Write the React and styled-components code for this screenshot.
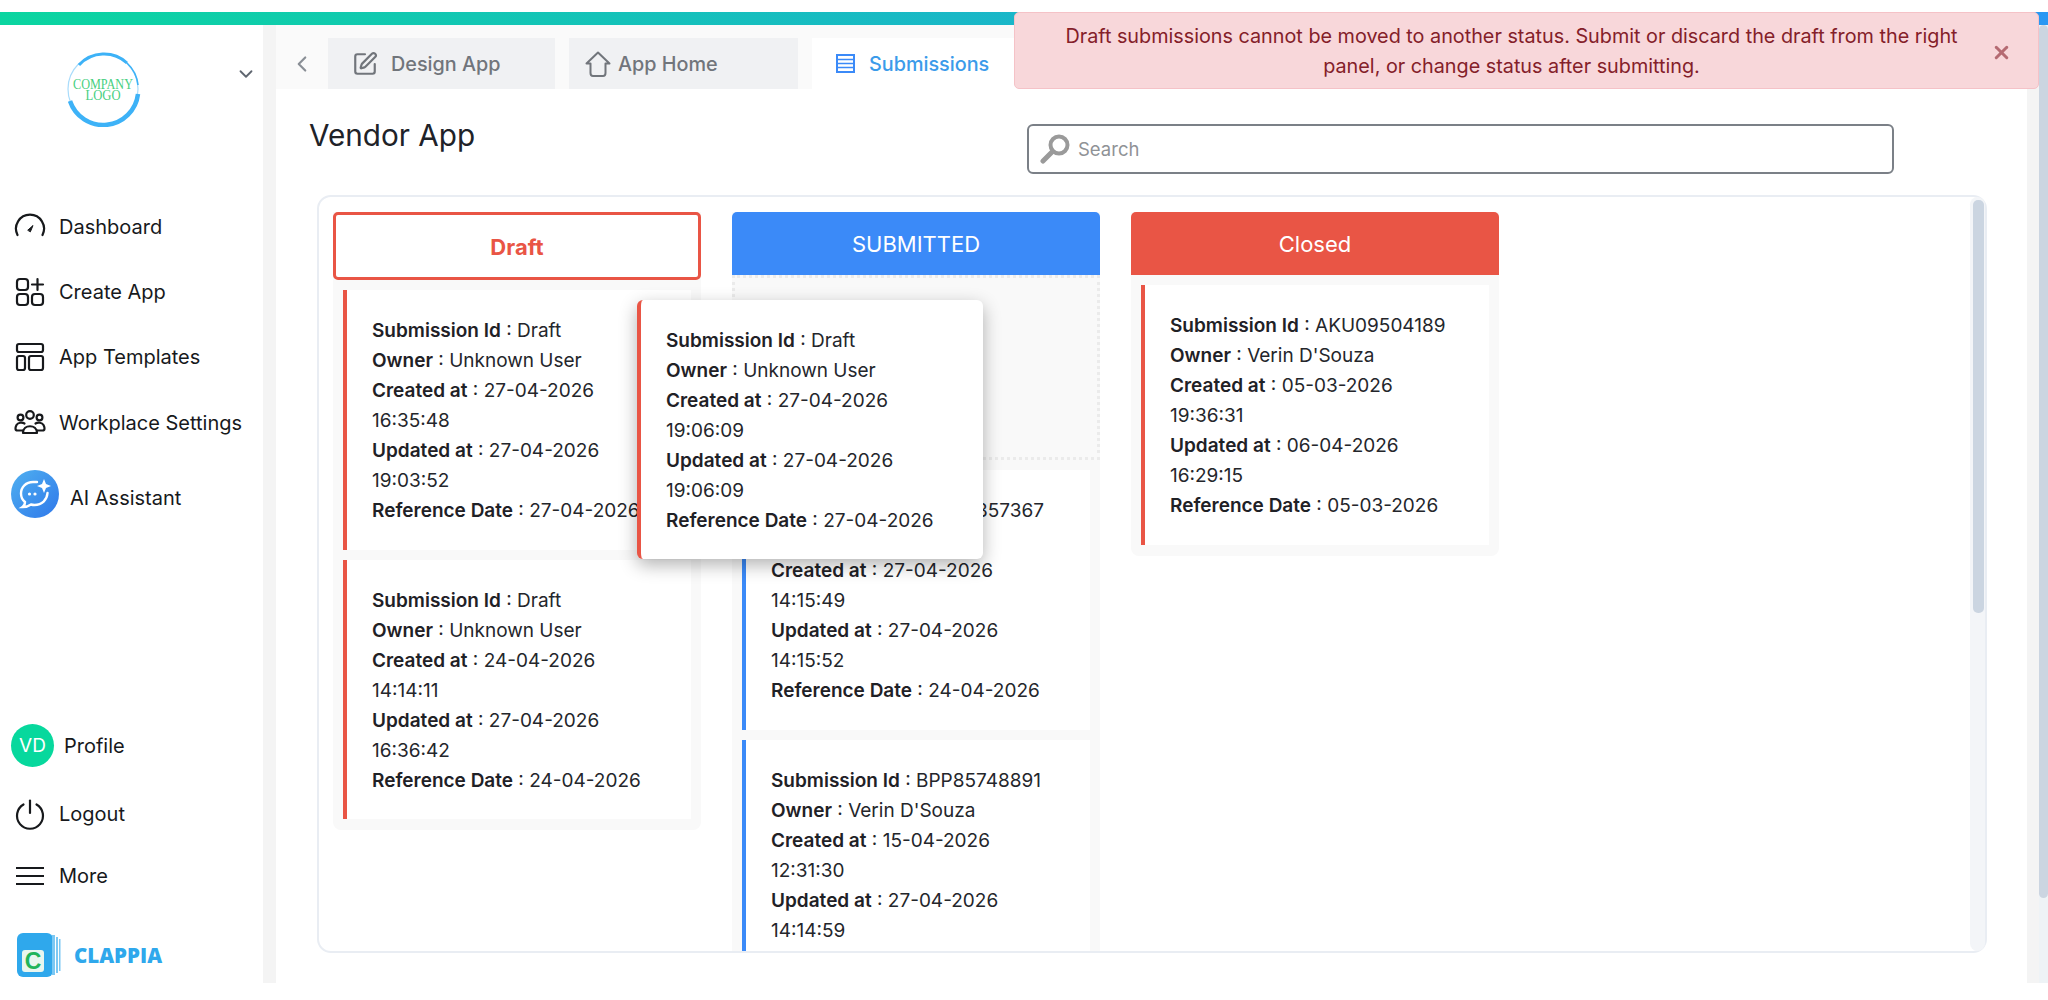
import React from "react";
import styled, { createGlobalStyle } from "styled-components";
import { ChevronDown, ChevronLeft, SquarePen, X } from "lucide-react";

const GlobalStyle = createGlobalStyle`
  html, body {
    margin: 0;
    height: 100%;
    overflow: hidden;
    background: #ffffff;
    font-family: Inter, "Liberation Sans", sans-serif;
    color: #1f2126;
  }
  * { box-sizing: border-box; }
`;

const Page = styled.div`
  position: relative;
  width: 2048px;
  height: 1000px;
  padding-top: 12px;
  overflow: hidden;
`;

const ProgressBar = styled.div`
  height: 13px;
  background: linear-gradient(90deg, #0bd5a0 0%, #1ab6c9 50%, #2997f3 100%);
`;

const Shell = styled.div`
  display: flex;
  height: 958px;
`;

const Sidebar = styled.aside`
  flex: 0 0 263px;
  display: flex;
  flex-direction: column;
  background: #ffffff;
  padding-bottom: 6px;
`;

const Brand = styled.div`
  position: relative;
  height: 169px;
  padding: 26px 0 0 65px;
`;

const BrandChevron = styled(ChevronDown)`
  position: absolute;
  top: 38px;
  left: 235px;
  color: #5f6670;
`;

const NavItem = styled.div`
  display: flex;
  align-items: center;
  gap: ${(p) => p.$gap || 13}px;
  height: ${(p) => p.$h || 65.3}px;
  padding-left: ${(p) => p.$left || 14}px;
  margin-top: ${(p) => p.$top || 0}px;
  font-size: 20px;
  color: #17191c;
`;

const NavIcon = styled.svg`
  flex: 0 0 32px;
  width: 32px;
  height: 32px;
  fill: none;
  stroke: #17191c;
  stroke-width: 2.2;
  stroke-linecap: round;
  stroke-linejoin: round;
`;

const AiBadge = styled.div`
  flex: 0 0 48px;
  width: 48px;
  height: 48px;
  border-radius: 50%;
  background: linear-gradient(135deg, #4fb0f0, #2f78ea);
  display: flex;
  align-items: center;
  justify-content: center;
`;

const AiLabel = styled.span`
  padding-top: 7px;
`;

const SidebarBottom = styled.div`
  margin-top: auto;
`;

const Avatar = styled.div`
  flex: 0 0 43px;
  width: 43px;
  height: 43px;
  border-radius: 50%;
  background: #07d89d;
  color: #ffffff;
  font-size: 19px;
  display: flex;
  align-items: center;
  justify-content: center;
`;

const ClappiaRow = styled.div`
  display: flex;
  align-items: center;
  gap: 13px;
  height: 44px;
  margin-top: 35px;
  padding-left: 17px;
`;

const ClappiaName = styled.span`
  font-family: "Open Sans", sans-serif;
  font-weight: 800;
  font-size: 20.5px;
  color: #2fa8ec;
`;

const Main = styled.main`
  flex: 1;
  height: 958px;
  overflow: hidden;
  padding: 0 12px 0 13px;
  background: #f4f4f4;
`;

const PageScrollbar = styled.div`
  flex: 0 0 9px;
  background: #eef3f6;
`;

const ScrollThumb = styled.div`
  height: ${(p) => p.$h}px;
  background: #cbd5e1;
  border-radius: 5px;
`;

const Content = styled.div`
  height: 100%;
  background: #ffffff;
`;

const TabBar = styled.div`
  display: flex;
  align-items: flex-end;
  height: 64px;
  background: #fafafa;
`;

const TabBack = styled(ChevronLeft)`
  flex: 0 0 52px;
  align-self: center;
  margin-top: 13px;
  color: #8a8f96;
`;

const Tab = styled.div`
  display: flex;
  align-items: center;
  gap: ${(p) => p.$gap}px;
  width: ${(p) => p.$w}px;
  height: 51px;
  margin-right: 14px;
  padding-left: ${(p) => p.$pad}px;
  background: ${(p) => (p.$active ? "#ffffff" : "#f0f1f3")};
  color: ${(p) => (p.$active ? "#3b9bea" : "#71757b")};
  font-size: 19.8px;
  font-weight: 500;
`;

const TabIcon = styled.svg`
  fill: none;
  stroke: currentColor;
  stroke-width: 2;
  stroke-linejoin: round;
  stroke-linecap: round;
`;

const HeadRow = styled.div`
  display: grid;
  grid-template-columns: 718px 867px;
  height: 106px;
  padding: 35px 0 0 33px;
`;

const Title = styled.h1`
  margin: -3px 0 0;
  font-size: 29.7px;
  font-weight: 400;
  line-height: 1;
  color: #202228;
`;

const SearchBox = styled.label`
  display: flex;
  align-items: center;
  gap: 6px;
  height: 50px;
  padding-left: 11px;
  border: 2px solid #7b8087;
  border-radius: 6px;
`;

const SearchInput = styled.input`
  flex: 1;
  border: 0;
  outline: 0;
  background: transparent;
  font: 400 18.5px Inter, sans-serif;
  &::placeholder { color: #8f9296; opacity: 1; }
`;

const Board = styled.section`
  position: relative;
  width: 1670px;
  height: 758px;
  margin-left: 41px;
  border: 2px solid #e9edf3;
  border-radius: 14px;
  background: #ffffff;
`;

const BoardClip = styled.div`
  height: 100%;
  overflow: hidden;
  border-radius: 12px;
`;

const BoardScrollbar = styled.div`
  position: absolute;
  top: 0;
  right: 0;
  bottom: 0;
  width: 15px;
  padding: 3px 1px 0 3px;
  background: #f3f5f8;
  border-radius: 8px;
`;

const Lanes = styled.div`
  display: flex;
  align-items: flex-start;
  gap: 31px;
  padding: 15px 0 0 14px;
`;

const Lane = styled.div`
  flex: 0 0 368px;
  background: #f9f9f9;
  border-radius: 0 0 8px 8px;
  padding-bottom: 11px;
`;

const LaneHead = styled.div`
  display: flex;
  align-items: center;
  justify-content: center;
  height: ${(p) => (p.$outlined ? 68 : 63)}px;
  border-radius: 5px 5px 0 0;
  font-size: 22px;
  background: ${(p) => (p.$outlined ? "#ffffff" : p.$color)};
  color: ${(p) => (p.$outlined ? p.$color : "#ffffff")};
  font-weight: ${(p) => (p.$outlined ? 700 : 400)};
  border: ${(p) => (p.$outlined ? `3px solid ${p.$color}` : "0")};
  ${(p) => p.$outlined && "border-radius: 5px; padding-top: 2px;"}
`;

const DropZone = styled.div`
  height: 185px;
  border: 3px dotted #ebebeb;
`;

const LaneCards = styled.div`
  display: flex;
  flex-direction: column;
  gap: 10px;
  padding: 10px 10px 0 10px;
`;

const Card = styled.article`
  width: 348px;
  height: 259.5px;
  padding: 26px 25px 0;
  background: #ffffff;
  border-left: 4.5px solid ${(p) => p.$color};
  font-size: 19px;
  line-height: 30px;
  color: #24262b;
`;

const FloatingCard = styled(Card)`
  position: absolute;
  top: 103px;
  left: 318px;
  width: 346px;
  height: 259px;
  border-radius: 6px;
  box-shadow: 0 6px 18px rgba(0, 0, 0, 0.3);
`;

const Line = styled.div`
  b { font-weight: 600; color: #1f2126; }
`;

const Toast = styled.div`
  position: absolute;
  top: 12px;
  left: 1014px;
  width: 1025px;
  height: 77px;
  padding: 8px 70px 0 40px;
  background: #f8d7da;
  border: 1px solid #f5c2c7;
  border-radius: 5px;
  color: #842029;
  font-size: 19.8px;
  line-height: 30px;
  text-align: center;
`;

const ToastClose = styled(X)`
  position: absolute;
  top: 29px;
  right: 26px;
  color: #b56a72;
`;

function DashboardIcon() {
  return (
    <NavIcon viewBox="0 0 32 32">
      <path d="M3.5 24 A14 14 0 1 1 28.5 24" />
      <path d="M14 19 L19 14.5 L16.5 20.5 Z" fill="#17191c" strokeWidth="1" />
    </NavIcon>
  );
}

function CreateAppIcon() {
  return (
    <NavIcon viewBox="0 0 32 32">
      <rect x="3" y="3" width="11" height="11" rx="3" />
      <rect x="3" y="18" width="11" height="11" rx="3" />
      <rect x="18" y="18" width="11" height="11" rx="3" />
      <path d="M23.5 3v11M18 8.5h11" />
    </NavIcon>
  );
}

function TemplatesIcon() {
  return (
    <NavIcon viewBox="0 0 32 32">
      <rect x="3" y="3" width="26" height="8" rx="2" />
      <rect x="3" y="15" width="8" height="14" rx="2" />
      <rect x="15" y="15" width="14" height="14" rx="2" />
    </NavIcon>
  );
}

function UsersIcon() {
  return (
    <NavIcon viewBox="0 0 32 32" strokeWidth="1.9">
      <circle cx="16" cy="8" r="3.8" />
      <circle cx="6.5" cy="10.5" r="2.9" />
      <circle cx="25.5" cy="10.5" r="2.9" />
      <path d="M9 26 C9 17 23 17 23 26 Z" />
      <path d="M9 23.5 H3.5 C1 23.5 1 21 2.5 18 C4 15.5 8 15 10.5 16.5" />
      <path d="M23 23.5 H28.5 C31 23.5 31 21 29.5 18 C28 15.5 24 15 21.5 16.5" />
    </NavIcon>
  );
}

function PowerIcon() {
  return (
    <NavIcon viewBox="0 0 32 32" strokeWidth="2.4">
      <path d="M16 2.5 V15" />
      <path d="M9.5 6.5 A13 13 0 1 0 22.5 6.5" />
    </NavIcon>
  );
}

function MenuIcon() {
  return (
    <NavIcon viewBox="0 0 32 32">
      <path d="M2 8h28M2 16h28M2 24h28" strokeLinecap="butt" />
    </NavIcon>
  );
}

function AiIcon() {
  return (
    <AiBadge>
      <svg width="34" height="34" viewBox="0 0 34 34" fill="none">
        <path
          d="M19 5 H15 C8 5 3 10 3 16.5 C3 20 4.5 23 7 25 C7 27 6 29 4.5 30 C8 30 11 29 13 27.5 C14 27.8 15 28 16.5 28 C24 28 29 23 29.5 16"
          stroke="#ffffff"
          strokeWidth="2.4"
          strokeLinecap="round"
        />
        <path d="M26 2 L28 7 L33 9 L28 11 L26 16 L24 11 L19 9 L24 7 Z" fill="#ffffff" />
        <circle cx="11.5" cy="17" r="1.6" fill="#ffffff" />
        <circle cx="17" cy="17" r="1.6" fill="#ffffff" />
      </svg>
    </AiBadge>
  );
}

function CompanyLogo() {
  return (
    <svg width="76" height="76" viewBox="0 0 76 76" fill="none">
      <circle cx="38" cy="38" r="35" stroke="#a9dcfb" strokeWidth="1.2" />
      <path d="M5 50 A35 35 0 0 0 73 43" stroke="#3db2f7" strokeWidth="4.5" />
      <path d="M14 14 A34 34 0 0 1 62 12" stroke="#3db2f7" strokeWidth="3" />
      <path d="M62 12 A35 35 0 0 1 73 34" stroke="#3db2f7" strokeWidth="1.6" />
      <text x="38" y="38" textAnchor="middle" fontFamily="Liberation Serif, serif" fontSize="14" textLength="60" lengthAdjust="spacingAndGlyphs" fill="#46cf80">COMPANY</text>
      <text x="38" y="49" textAnchor="middle" fontFamily="Liberation Serif, serif" fontSize="14" textLength="35" lengthAdjust="spacingAndGlyphs" fill="#46cf80">LOGO</text>
    </svg>
  );
}

function ClappiaLogo() {
  return (
    <svg width="44" height="44" viewBox="0 0 44 44" fill="none">
      <rect x="0" y="0" width="36" height="44" rx="6" fill="#2fa8ec" />
      <path d="M35 2h3v40h-3zM39 4h2v36h-2zM42 6h1.5v32H42z" fill="#7cc8f3" />
      <rect x="5" y="17" width="22" height="22" rx="3" fill="#e9f6ef" />
      <text x="16" y="36" textAnchor="middle" fontFamily="Liberation Sans, sans-serif" fontWeight="700" fontSize="23" fill="#22b45a">C</text>
    </svg>
  );
}

function HomeIcon() {
  return (
    <TabIcon width="26" height="26" viewBox="0 0 26 26">
      <path d="M1.5 12.5 L13 1.5 L24.5 12.5 H20.5 V22 C20.5 24 19.5 25 18 25 H8 C6.5 25 5.5 24 5.5 22 V12.5 Z" />
    </TabIcon>
  );
}

function SubmissionsIcon() {
  return (
    <svg width="19" height="19" viewBox="0 0 19 19" fill="none" stroke="#3b8af8" strokeWidth="2">
      <rect x="1" y="1" width="17" height="17" />
      <path d="M1 5.5h17M1 9.5h17M1 13.5h17" strokeWidth="1.6" />
    </svg>
  );
}

function SearchGlass() {
  return (
    <svg width="30" height="30" viewBox="0 0 30 30" fill="none" stroke="#9a9a9a">
      <circle cx="19" cy="11" r="8.5" strokeWidth="4" />
      <path d="M12.5 17.5 L3 27" strokeWidth="5" strokeLinecap="round" />
    </svg>
  );
}

const RED = "#e95545";
const BLUE = "#3b8af8";

function SubmissionCard({ as: Wrapper = Card, color, data }) {
  return (
    <Wrapper $color={color}>
      <Line><b>Submission Id</b> : {data.id}</Line>
      <Line><b>Owner</b> : {data.owner}</Line>
      <Line><b>Created at</b> : {data.created}</Line>
      <Line><b>Updated at</b> : {data.updated}</Line>
      <Line><b>Reference Date</b> : {data.reference}</Line>
    </Wrapper>
  );
}

const draftCards = [
  { id: "Draft", owner: "Unknown User", created: "27-04-2026 16:35:48", updated: "27-04-2026 19:03:52", reference: "27-04-2026" },
  { id: "Draft", owner: "Unknown User", created: "24-04-2026 14:14:11", updated: "27-04-2026 16:36:42", reference: "24-04-2026" },
];

const submittedCards = [
  { id: "BPP85857367", owner: "Verin D'Souza", created: "27-04-2026 14:15:49", updated: "27-04-2026 14:15:52", reference: "24-04-2026" },
  { id: "BPP85748891", owner: "Verin D'Souza", created: "15-04-2026 12:31:30", updated: "27-04-2026 14:14:59", reference: "15-04-2026" },
];

const closedCard = { id: "AKU09504189", owner: "Verin D'Souza", created: "05-03-2026 19:36:31", updated: "06-04-2026 16:29:15", reference: "05-03-2026" };

const draggedCard = { id: "Draft", owner: "Unknown User", created: "27-04-2026 19:06:09", updated: "27-04-2026 19:06:09", reference: "27-04-2026" };

export default function App() {
  return (
    <Page>
      <GlobalStyle />
      <ProgressBar />
      <Shell>
        <Sidebar>
          <Brand>
            <CompanyLogo />
            <BrandChevron size={22} strokeWidth={2} />
          </Brand>
          <NavItem><DashboardIcon />Dashboard</NavItem>
          <NavItem><CreateAppIcon />Create App</NavItem>
          <NavItem><TemplatesIcon />App Templates</NavItem>
          <NavItem><UsersIcon />Workplace Settings</NavItem>
          <NavItem $left={11} $gap={11} $h={48} $top={15}><AiIcon /><AiLabel>AI Assistant</AiLabel></NavItem>
          <SidebarBottom>
            <NavItem $left={11} $gap={10} $h={43}><Avatar>VD</Avatar>Profile</NavItem>
            <NavItem $h={44} $top={25}><PowerIcon />Logout</NavItem>
            <NavItem $h={44} $top={18}><MenuIcon />More</NavItem>
            <ClappiaRow>
              <ClappiaLogo />
              <ClappiaName>CLAPPIA</ClappiaName>
            </ClappiaRow>
          </SidebarBottom>
        </Sidebar>
        <Main>
          <Content>
            <TabBar>
              <TabBack size={26} strokeWidth={2} />
              <Tab $w={227} $pad={24} $gap={13}><SquarePen size={26} strokeWidth={2} />Design App</Tab>
              <Tab $w={229} $pad={16} $gap={7}><HomeIcon />App Home</Tab>
              <Tab $w={260} $pad={24} $gap={14} $active><SubmissionsIcon />Submissions</Tab>
            </TabBar>
            <HeadRow>
              <Title>Vendor App</Title>
              <SearchBox>
                <SearchGlass />
                <SearchInput placeholder="Search" />
              </SearchBox>
            </HeadRow>
            <Board>
              <BoardClip>
                <Lanes>
                  <Lane>
                    <LaneHead $outlined $color={RED}>Draft</LaneHead>
                    <LaneCards>
                      {draftCards.map((c, i) => <SubmissionCard key={i} color={RED} data={c} />)}
                    </LaneCards>
                  </Lane>
                  <Lane>
                    <LaneHead $color={BLUE}>SUBMITTED</LaneHead>
                    <DropZone />
                    <LaneCards>
                      {submittedCards.map((c, i) => <SubmissionCard key={i} color={BLUE} data={c} />)}
                    </LaneCards>
                  </Lane>
                  <Lane>
                    <LaneHead $color={RED}>Closed</LaneHead>
                    <LaneCards>
                      <SubmissionCard color={RED} data={closedCard} />
                    </LaneCards>
                  </Lane>
                </Lanes>
              </BoardClip>
              <BoardScrollbar><ScrollThumb $h={413} /></BoardScrollbar>
              <SubmissionCard as={FloatingCard} color={RED} data={draggedCard} />
            </Board>
          </Content>
        </Main>
        <PageScrollbar><ScrollThumb $h={873} /></PageScrollbar>
      </Shell>
      <Toast>
        Draft submissions cannot be moved to another status. Submit or discard the draft from the right panel, or change status after submitting.
        <ToastClose size={21} strokeWidth={3.5} />
      </Toast>
    </Page>
  );
}
